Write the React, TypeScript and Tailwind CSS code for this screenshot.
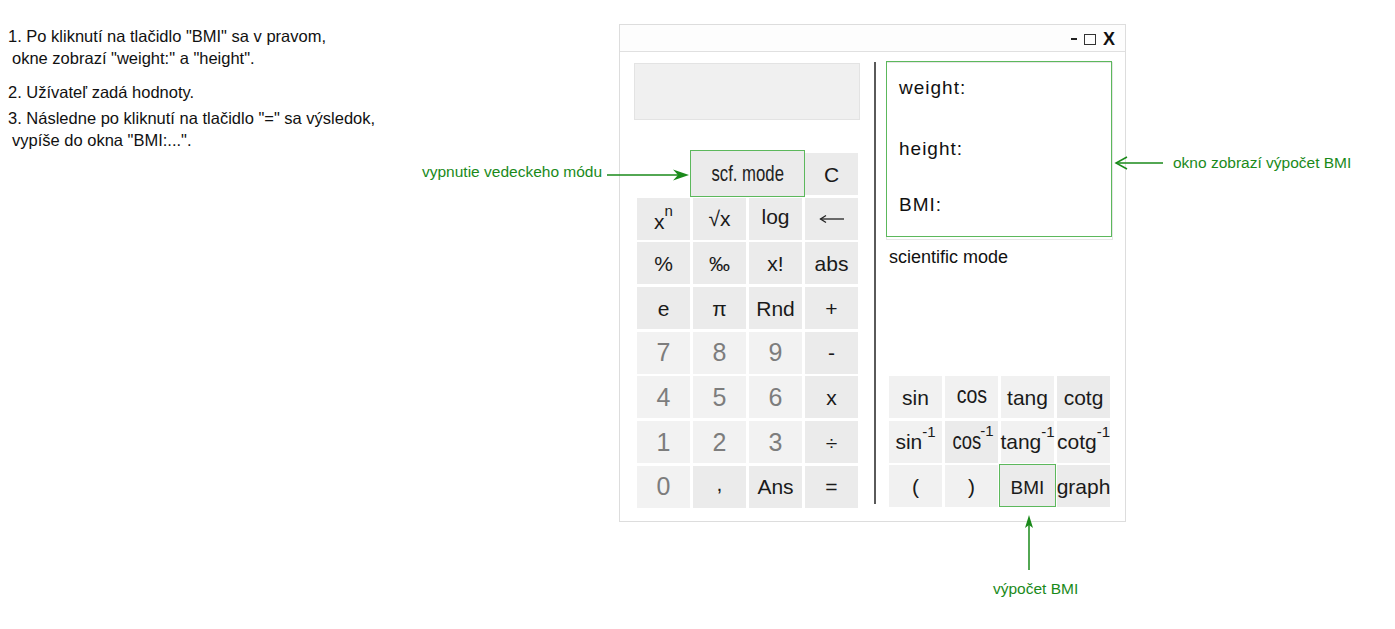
const green = "#1a8a1a";

function Key({
  children,
  tone = "fn",
  className = "",
}: {
  children: React.ReactNode;
  tone?: "fn" | "digit" | "light";
  className?: string;
}) {
  const toneCls =
    tone === "digit"
      ? "bg-[#f2f2f2] text-[#7d7d7d] text-[25px]"
      : tone === "light"
      ? "bg-[#f1f1f1] text-[#1a1a1a] text-[21px]"
      : "bg-[#ebebeb] text-[#1a1a1a] text-[21px]";
  return (
    <div className={`flex items-center justify-center leading-none ${toneCls} ${className}`}>
      {children}
    </div>
  );
}

function Inv({ base, narrow }: { base: string; narrow?: boolean }) {
  return (
    <span className="flex items-start">
      <span className={narrow ? "inline-block scale-x-[0.8]" : ""}>{base}</span>
      <span className={`text-[15px] -mt-[7px] ${narrow ? "-ml-[5px]" : ""}`}>-1</span>
    </span>
  );
}

export default function App() {
  return (
    <div className="relative w-[1395px] h-[629px] bg-white flex font-['Liberation_Sans',Arial,sans-serif] text-[#111]">
      {/* notes */}
      <div className="w-[619px] shrink-0 pl-[8px] pt-[25px] text-[16.5px] leading-[22px]">
        <div>1. Po kliknutí na tlačidlo "BMI" sa v pravom,</div>
        <div className="pl-[4px]">okne zobrazí "weight:" a "height".</div>
        <div className="mt-[12px]">2. Užívateľ zadá hodnoty.</div>
        <div className="mt-[4px]">3. Následne po kliknutí na tlačidlo "=" sa výsledok,</div>
        <div className="pl-[4px]">vypíše do okna "BMI:...".</div>
      </div>

      {/* window */}
      <div className="mt-[24px] w-[507px] h-[498px] border border-[#dddddd] flex flex-col">
        <div className="h-[27px] border-b border-[#e0e0e0] bg-[#fdfdfd] flex items-center justify-end gap-[7px] pr-[10px] pt-[2px]">
          <span className="w-[6px] h-[2.5px] bg-[#222]" />
          <span className="w-[12px] h-[11px] border-[1.5px] border-[#333]" />
          <span className="text-[18px] font-bold leading-none">X</span>
        </div>

        <div className="flex flex-1 pl-[14px]">
          {/* left column */}
          <div className="w-[226px] pt-[11px]">
            <div className="h-[57px] bg-[#f0f0f0] border border-[#e3e3e3]" />
            <div className="mt-[33px] ml-[3px] grid grid-cols-[repeat(4,53px)] auto-rows-[42px] gap-x-[3px] gap-y-[2.7px]">
              <div className="col-start-2 col-span-2 -mx-[3px] -mt-[3px] -mb-[2px] border border-[#5cb85c] bg-[#ebebeb] flex items-center justify-center text-[22px] text-[#222]">
                <span className="inline-block scale-x-[0.76]">scf. mode</span>
              </div>
              <Key>C</Key>

              <Key>
                <span className="flex items-start">
                  <span className="mt-[6px]">x</span>
                  <span className="text-[15px] -mt-[2px]">n</span>
                </span>
              </Key>
              <Key>√x</Key>
              <Key className="pb-[4px]">log</Key>
              <Key>
                <svg width="26" height="10" viewBox="0 0 26 10">
                  <line x1="1.5" y1="5" x2="25" y2="5" stroke="#222" strokeWidth="1.3" />
                  <polyline points="7,1.5 1.5,5 7,8.5" fill="none" stroke="#222" strokeWidth="1.3" />
                </svg>
              </Key>

              <Key>%</Key>
              <Key>‰</Key>
              <Key>x!</Key>
              <Key>abs</Key>

              <Key>e</Key>
              <Key>π</Key>
              <Key>Rnd</Key>
              <Key>+</Key>

              <Key tone="digit">7</Key>
              <Key tone="digit">8</Key>
              <Key tone="digit">9</Key>
              <Key>-</Key>

              <Key tone="digit">4</Key>
              <Key tone="digit">5</Key>
              <Key tone="digit">6</Key>
              <Key>x</Key>

              <Key tone="digit">1</Key>
              <Key tone="digit">2</Key>
              <Key tone="digit">3</Key>
              <Key>÷</Key>

              <Key tone="digit">0</Key>
              <Key className="pb-[6px]">,</Key>
              <Key>Ans</Key>
              <Key>=</Key>
            </div>
          </div>

          {/* divider */}
          <div className="ml-[14px] mt-[10px] w-[2px] h-[442px] bg-[#5a5a5a]" />

          {/* right column */}
          <div className="ml-[10px] w-[227px] pt-[10px]">
            <div className="relative h-[178px] border border-[#e6e6e6]">
              <div className="absolute -top-[2px] -left-[1px] w-[226px] h-[176px] border border-[#5cb85c] pl-[12px] pt-[15px] text-[19px] leading-[22px] tracking-[1px]">
                <div>weight:</div>
                <div className="mt-[39px]">height:</div>
                <div className="mt-[34px]">BMI:</div>
              </div>
            </div>
            <div className="mt-[6px] pl-[3px] text-[18px] leading-[22px]">scientific mode</div>

            <div className="mt-[108px] ml-[3px] grid grid-cols-[repeat(4,53px)] auto-rows-[42px] gap-x-[3px] gap-y-[2.7px]">
              <Key tone="light">sin</Key>
              <Key tone="light" className="pb-[3px]">
                <span className="inline-block scale-x-[0.85] text-[23px]">cos</span>
              </Key>
              <Key tone="light">tang</Key>
              <Key>cotg</Key>

              <Key tone="light">
                <Inv base="sin" />
              </Key>
              <Key>
                <span className="text-[23px]">
                  <Inv base="cos" narrow />
                </span>
              </Key>
              <Key tone="light">
                <Inv base="tang" />
              </Key>
              <Key tone="light">
                <Inv base="cotg" />
              </Key>

              <Key tone="light">(</Key>
              <Key tone="light">)</Key>
              <div className="-mx-[2px] -mt-[1px] border border-[#5cb85c] bg-[#ebebeb] flex items-center justify-center pt-[5px] text-[19px] text-[#1a1a1a]">
                BMI
              </div>
              <Key className="text-[18.5px]">graph</Key>
            </div>
          </div>
        </div>
      </div>

      {/* annotations */}
      <div className="absolute left-[422px] top-[162px] text-[15.5px] leading-[20px]" style={{ color: green }}>
        vypnutie vedeckeho módu
      </div>
      <div className="absolute left-[1173px] top-[153px] text-[15.5px] leading-[20px]" style={{ color: green }}>
        okno zobrazí výpočet BMI
      </div>
      <div className="absolute left-[993px] top-[579px] text-[15.5px] leading-[20px]" style={{ color: green }}>
        výpočet BMI
      </div>
      <svg className="absolute left-0 top-0 pointer-events-none" width="1395" height="629">
        <line x1="607" y1="175" x2="680" y2="175" stroke={green} strokeWidth="1.5" />
        <polygon points="689,175 673,169.5 678,175 673,180.5" fill={green} />
        <line x1="1116" y1="163" x2="1163" y2="163" stroke={green} strokeWidth="1.5" />
        <polyline points="1127,157 1116,163 1127,169" fill="none" stroke={green} strokeWidth="1.5" />
        <line x1="1029" y1="522" x2="1029" y2="570" stroke={green} strokeWidth="1.5" />
        <polygon points="1029,515 1025,528 1029,525 1033,528" fill={green} />
      </svg>
    </div>
  );
}
